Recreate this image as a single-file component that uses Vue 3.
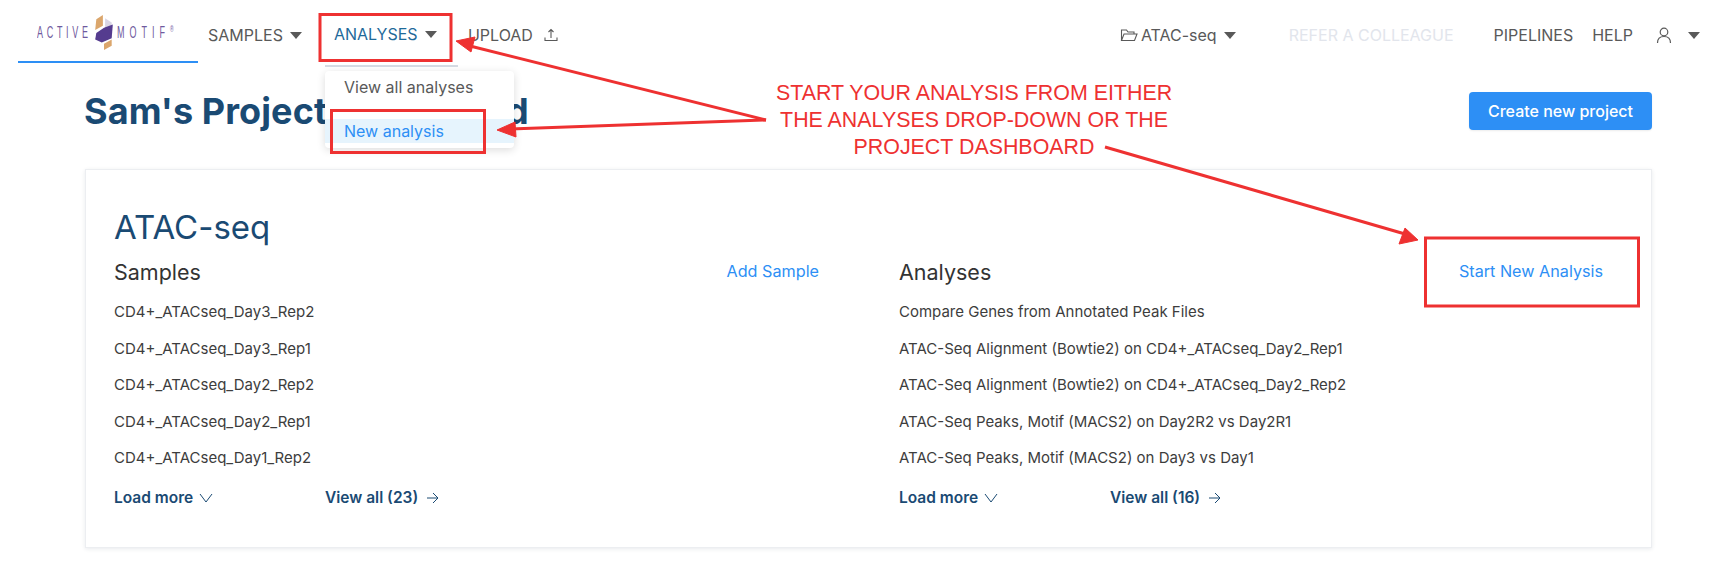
<template>
  <div class="page">
    <header class="topbar">
      <a class="logo">
        <span class="logo-word">ACTIVE</span>
        <svg class="logo-mark" width="22" height="36" viewBox="0 0 20 34" preserveAspectRatio="none">
          <path d="M9 1 L3 5 L2 15 L9 11 Z" fill="#dba66c" />
          <path d="M11 4 L17 8 L17 16 L11 13 Z" fill="#d9d5e4" />
          <path d="M10 13 L18 10 L17 23 L8 27 L2 24 L3 18 Z" fill="#553c8f" />
          <path d="M10 28 L17 24 L17 30 L10 34 Z" fill="#dba66c" />
        </svg>
        <span class="logo-word motif">MOTIF<sup>®</sup></span>
      </a>
      <nav class="nav-left">
        <a class="nav-item samples">SAMPLES <i class="caret"></i></a>
        <a class="nav-item analyses">ANALYSES <i class="caret"></i></a>
        <a class="nav-item upload">
          UPLOAD
          <svg width="14" height="14" viewBox="0 0 14 14" fill="none" stroke="#595959" stroke-width="1.1">
            <path d="M7 10V1.5M4.5 4 7 1.5 9.5 4M1 9.5v3h12v-3" />
          </svg>
        </a>
      </nav>
      <nav class="nav-right">
        <a class="nav-item project">
          <svg width="18" height="14" viewBox="0 0 18 14" fill="none" stroke="#595959" stroke-width="1.1">
            <path d="M1.5 12.5V2h5l1.5 2h6v2M1.5 12.5 4 6h13l-2.5 6.5Z" />
          </svg>
          ATAC-seq <i class="caret"></i>
        </a>
        <a class="nav-item refer">REFER A COLLEAGUE</a>
        <a class="nav-item pipelines">PIPELINES</a>
        <a class="nav-item help">HELP</a>
        <a class="nav-item user">
          <svg width="16" height="17" viewBox="0 0 16 17" fill="none" stroke="#595959" stroke-width="1.2">
            <circle cx="8" cy="5" r="3.8" />
            <path d="M1.5 16c0-4 2.5-6.5 6.5-6.5s6.5 2.5 6.5 6.5" />
          </svg>
          <i class="caret"></i>
        </a>
      </nav>
    </header>

    <main class="content">
      <div class="title-row">
        <h1>Sam's Project Dashboard</h1>
        <button class="create-btn">Create new project</button>
      </div>

      <section class="card">
        <h2>ATAC-seq</h2>
        <div class="columns">
          <div v-for="col in columns" :key="col.title" class="col">
            <div class="col-head">
              <h3>{{ col.title }}</h3>
              <a class="col-action">{{ col.action }}</a>
            </div>
            <ul>
              <li v-for="row in col.rows" :key="row">{{ row }}</li>
            </ul>
            <div class="col-foot">
              <a class="load-more">
                Load more
                <svg width="14" height="10" viewBox="0 0 14 10" fill="none" stroke="#1a4a73" stroke-width="1">
                  <path d="M1 1l6 8 6-8" />
                </svg>
              </a>
              <a class="view-all">
                View all ({{ col.total }})
                <svg width="13" height="12" viewBox="0 0 13 12" fill="none" stroke="#1a4a73" stroke-width="1">
                  <path d="M1 6h11M7 1l5 5-5 5" />
                </svg>
              </a>
            </div>
          </div>
        </div>
      </section>
    </main>

    <!-- dropdown sits over the page title -->
    <div class="dropdown">
      <div class="dropdown-item">View all analyses</div>
      <div class="dropdown-item active">New analysis</div>
    </div>

    <!-- red annotations drawn on top of the screenshot -->
    <svg class="marks" width="1716" height="564" viewBox="0 0 1716 564" fill="none">
      <rect x="320" y="14.5" width="131" height="46" stroke="#ee3131" stroke-width="3" />
      <rect x="331.5" y="110.5" width="153" height="42" stroke="#ee3131" stroke-width="3" />
      <rect x="1425.5" y="238" width="213" height="68" stroke="#ee3131" stroke-width="3" />
      <path d="M766 120 470 46" stroke="#ee3131" stroke-width="3" />
      <path d="M456 41 475 37 471 52Z" fill="#ee3131" stroke="#ee3131" />
      <path d="M766 120 510 129" stroke="#ee3131" stroke-width="3" />
      <path d="M497 130 515 122 516 137Z" fill="#ee3131" stroke="#ee3131" />
      <path d="M1105 147 1405 234" stroke="#ee3131" stroke-width="3" />
      <path d="M1418 240 1399 244 1405 228Z" fill="#ee3131" stroke="#ee3131" />
    </svg>
    <p class="note">START YOUR ANALYSIS FROM EITHER<br />THE ANALYSES DROP-DOWN OR THE<br />PROJECT DASHBOARD</p>
  </div>
</template>

<script setup>
const columns = [
  {
    title: 'Samples',
    action: 'Add Sample',
    total: 23,
    rows: [
      'CD4+_ATACseq_Day3_Rep2',
      'CD4+_ATACseq_Day3_Rep1',
      'CD4+_ATACseq_Day2_Rep2',
      'CD4+_ATACseq_Day2_Rep1',
      'CD4+_ATACseq_Day1_Rep2',
    ],
  },
  {
    title: 'Analyses',
    action: 'Start New Analysis',
    total: 16,
    rows: [
      'Compare Genes from Annotated Peak Files',
      'ATAC-Seq Alignment (Bowtie2) on CD4+_ATACseq_Day2_Rep1',
      'ATAC-Seq Alignment (Bowtie2) on CD4+_ATACseq_Day2_Rep2',
      'ATAC-Seq Peaks, Motif (MACS2) on Day2R2 vs Day2R1',
      'ATAC-Seq Peaks, Motif (MACS2) on Day3 vs Day1',
    ],
  },
]
</script>

<style>
html, body {
  background: #fff;
  overflow: hidden;
}
</style>

<style scoped>
.page {
  position: relative;
  width: 1716px;
  height: 564px;
  font-family: Inter, "Liberation Sans", sans-serif;
  color: #3d3d3d;
  overflow: hidden;
}

.topbar {
  display: flex;
  align-items: flex-start;
  height: 64px;
  padding-left: 18px;
}
.logo {
  display: flex;
  align-items: center;
  flex-shrink: 0;
  width: 180px;
  height: 63px;
  box-sizing: border-box;
  padding: 3px 0 0 19px;
  border-bottom: 2px solid #2d8ff5;
}
.logo-word {
  display: inline-block;
  width: 56px;
  font-size: 9px;
  line-height: 14px;
  letter-spacing: 3.7px;
  color: #6f5a9e;
  font-family: "Liberation Sans", sans-serif;
  transform: scaleY(1.9);
  white-space: nowrap;
}
.logo-word.motif {
  letter-spacing: 5px;
}
.logo-word sup {
  font-size: 5px;
  letter-spacing: 0;
  vertical-align: 3px;
  line-height: 0;
}
.logo-mark {
  flex-shrink: 0;
  margin-right: 2px;
}

.nav-left,
.nav-right {
  display: flex;
  align-items: center;
  height: 70px;
}
.nav-right {
  margin-left: auto;
  padding-right: 16px;
}
.nav-item {
  display: flex;
  align-items: center;
  font-size: 16px;
  color: #595959;
  white-space: nowrap;
}
.caret {
  display: inline-block;
  width: 0;
  height: 0;
  margin-left: 7px;
  border-left: 6px solid transparent;
  border-right: 6px solid transparent;
  border-top: 7px solid #595959;
}
.samples { margin-left: 10px; }
.analyses {
  box-sizing: border-box;
  width: 133px;
  height: 64px;
  margin-left: 23px;
  padding-left: 9px;
  color: #1f6a9a;
  border-bottom: 2px solid #d5dbe3;
}
.upload { margin-left: 10px; gap: 11px; }
.project svg { margin-right: 3px; }
.refer { margin-left: 53px; color: #e2e5ec; }
.pipelines { margin-left: 40px; }
.help { margin-left: 19px; }
.user { margin-left: 23px; }
.user .caret { margin-left: 16px; }

.content {
  padding: 0 64px 0 84px;
}
.title-row {
  display: flex;
  justify-content: space-between;
  align-items: center;
  height: 40px;
  margin-top: 27px;
}
h1 {
  margin: 0;
  font-size: 36px;
  font-weight: 700;
  color: #1a4a73;
  line-height: 40px;
  letter-spacing: 0.1px;
}
.create-btn {
  width: 183px;
  height: 38px;
  border: 0;
  border-radius: 4px;
  background: #2d8ff5;
  color: #fff;
  font-family: inherit;
  font-size: 16px;
  font-weight: 500;
  box-shadow: 0 1px 2px rgba(0, 0, 0, 0.08);
}

.card {
  box-sizing: border-box;
  height: 379px;
  margin-top: 38px;
  margin-left: 1px;
  padding: 37px 48px 0 28px;
  background: #fff;
  border: 1px solid #eceef1;
  box-shadow: 0 1px 4px rgba(30, 50, 80, 0.1);
}
h2 {
  margin: 0;
  font-size: 33px;
  font-weight: 400;
  line-height: 40px;
  color: #1a4a73;
}
.columns {
  display: grid;
  grid-template-columns: 705px 704px;
  column-gap: 80px;
  margin-top: 10px;
}
.col-head {
  display: flex;
  justify-content: space-between;
  align-items: center;
  height: 30px;
}
h3 {
  margin: 0;
  font-size: 21.5px;
  font-weight: 400;
  color: #333;
}
.col-action {
  font-size: 16.2px;
  color: #2d8ff5;
  margin-top: -2px;
}
ul {
  list-style: none;
  margin: 7px 0 0;
  padding: 0;
}
li {
  height: 36.5px;
  line-height: 36px;
  font-size: 15px;
  color: #3d3d3d;
}
.col-foot {
  display: flex;
  margin-top: 3px;
  height: 36px;
  align-items: center;
  font-size: 15.5px;
  font-weight: 600;
  color: #1a4a73;
}
.col-foot a {
  display: flex;
  align-items: center;
  gap: 6px;
}
.view-all svg { margin-left: 2px; }
.load-more { width: 211px; }

.dropdown {
  position: absolute;
  left: 325px;
  top: 71px;
  width: 189px;
  height: 77px;
  box-sizing: border-box;
  padding-top: 4px;
  background: #fff;
  border-radius: 4px;
  box-shadow: 0 2px 8px rgba(0, 0, 0, 0.14);
}
.dropdown-item {
  height: 24px;
  padding-left: 19px;
  line-height: 24px;
  font-size: 16px;
  color: #595959;
}
.dropdown-item:first-child { margin-bottom: 20px; }
.dropdown-item.active {
  background: #e6f4fd;
  color: #2d8ff5;
}

.marks {
  position: absolute;
  left: 0;
  top: 0;
  pointer-events: none;
}
.note {
  position: absolute;
  left: 760px;
  top: 80px;
  width: 428px;
  margin: 0;
  text-align: center;
  font-family: "Liberation Sans", sans-serif;
  font-size: 21.4px;
  line-height: 27px;
  color: #ee3131;
}
</style>
